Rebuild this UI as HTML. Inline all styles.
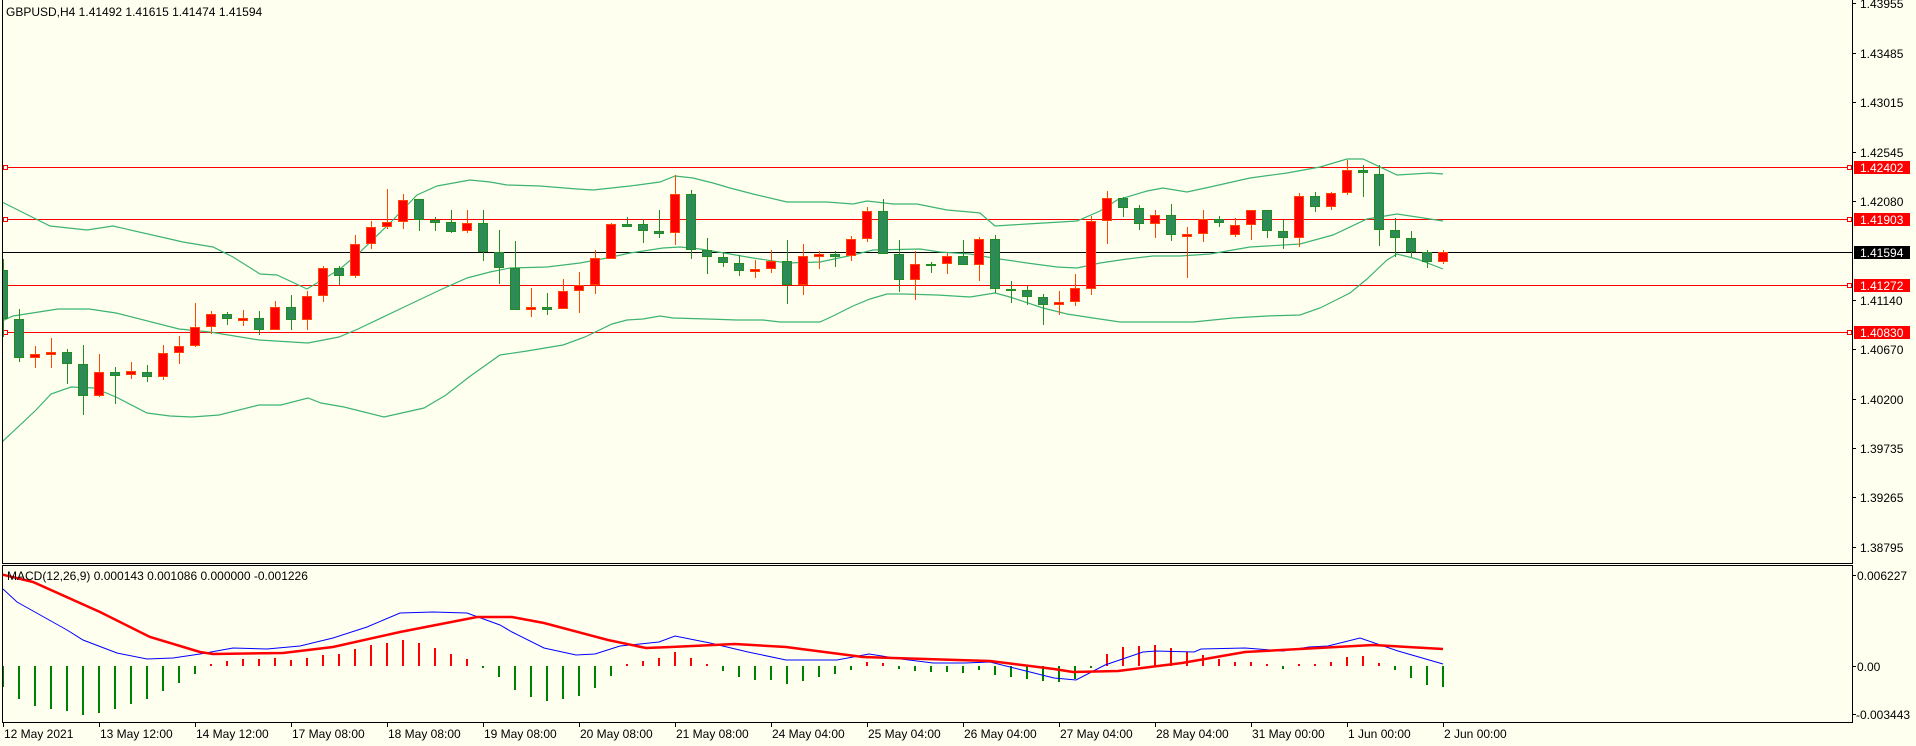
<!DOCTYPE html>
<html><head><meta charset="utf-8"><style>
html,body{margin:0;padding:0;background:#fffff0;}
svg{display:block;font-family:"Liberation Sans",sans-serif;font-size:12px;}
</style></head><body>
<svg width="1916" height="746" viewBox="0 0 1916 746" xmlns="http://www.w3.org/2000/svg">
<rect width="1916" height="746" fill="#fffff0"/>
<defs><clipPath id="main"><rect x="3" y="0" width="1849" height="563"/></clipPath>
<clipPath id="macd"><rect x="3" y="566" width="1849" height="156"/></clipPath></defs>

<!-- frames -->
<path d="M2.5 0V563.5H1852.5V0M2.5 565.5H1852.5V722.5H2.5Z" fill="none" stroke="#000" stroke-width="1"/>

<!-- horizontal lines -->
<g stroke="#ff0000" stroke-width="1">
<line x1="3" y1="167.5" x2="1852" y2="167.5"/>
<line x1="3" y1="219.5" x2="1852" y2="219.5"/>
<line x1="3" y1="285.5" x2="1852" y2="285.5"/>
<line x1="3" y1="332.5" x2="1852" y2="332.5"/>
</g>
<line x1="3" y1="252.5" x2="1852" y2="252.5" stroke="#000"/>
<g fill="#fff" stroke="#ff0000">
<rect x="3.5" y="165.5" width="4" height="4"/><rect x="3.5" y="217.5" width="4" height="4"/><rect x="3.5" y="283.5" width="4" height="4"/><rect x="3.5" y="330.5" width="4" height="4"/>
<rect x="1847.5" y="165.5" width="4" height="4"/><rect x="1847.5" y="217.5" width="4" height="4"/><rect x="1847.5" y="283.5" width="4" height="4"/><rect x="1847.5" y="330.5" width="4" height="4"/>
</g>

<!-- bollinger -->
<g fill="none" stroke="#3cb371" stroke-width="1.2" clip-path="url(#main)">
<polyline points="2,202 50,226 87,230 113,226 183,242 213,247 233,257 260,274 277,275 307,289 340,269 360,252 390,223 417,195 437,186 470,180 490,182 507,185 540,186 577,189 593,190 630,186 660,182 675,176 693,178 713,183 730,188 753,194 787,202 827,202 853,204 867,201 893,204 917,204 947,210 970,212 980,213 995,226 1027,224 1077,221 1100,211 1117,200 1147,191 1163,188 1187,192 1210,187 1250,178 1287,173 1320,167 1347,159 1363,159 1397,175 1430,173 1443,174"/>
<polyline points="2,321 13,316 58,309 89,309 116,313 179,329 210,332 259,340 308,343 339,337 358,329 402,308 440,290 467,278 490,272 510,268 547,267 580,263 607,258 630,253 663,248 680,247 700,249 730,254 753,258 787,263 820,262 853,255 873,250 920,249 940,252 970,254 993,258 1027,263 1057,267 1077,268 1100,263 1127,259 1153,256 1180,256 1210,254 1250,247 1300,244 1333,235 1367,219 1397,214 1417,217 1443,221"/>
<polyline points="2,442 36,410 51,394 71,387 94,388 116,397 147,413 170,416 192,417 219,415 259,405 281,405 308,398 321,403 344,407 384,417 424,408 446,395 469,377 500,355 527,351 563,345 585,337 612,324 627,320 643,319 660,316 673,318 707,319 737,320 763,320 780,322 820,322 833,316 853,306 870,299 887,294 903,294 937,295 970,297 995,293 1010,297 1043,308 1067,314 1093,318 1120,322 1193,322 1233,318 1267,316 1300,315 1320,308 1350,293 1367,279 1387,260 1397,254 1417,259 1443,269"/>
</g>

<!-- candles -->
<g clip-path="url(#main)">
<path stroke="#228b22" stroke-width="1" fill="none" d="M3.5 259V337M19.5 309V362M67.5 349V384M83.5 345V415M115.5 367V404M147.5 365V382M227.5 312V325M259.5 311V335M291.5 295V330M339.5 266V285M419.5 199V231M435.5 217V231M451.5 210V233M483.5 210V261M499.5 230V284M515.5 241V310M547.5 293V315M627.5 217V227M643.5 219V243M659.5 210V238M691.5 190V259M707.5 238V274M723.5 252V267M739.5 255V276M787.5 240V304M835.5 251V267M883.5 199V254M899.5 240V292M931.5 262V273M963.5 240V265M995.5 235V293M1011.5 281V303M1027.5 286V305M1043.5 294V325M1123.5 197V217M1139.5 205V230M1171.5 204V241M1219.5 216V227M1267.5 210V238M1283.5 220V249M1315.5 192V212M1363.5 165V197M1379.5 165V246M1395.5 218V257M1411.5 231V257M1427.5 250V268"/>
<path stroke="#ff4500" stroke-width="1" fill="none" d="M35.5 346V368M51.5 338V368M99.5 354V397M131.5 362V379M163.5 345V380M179.5 336V364M195.5 303V347M211.5 311V334M243.5 310V326M275.5 301V330M307.5 291V330M323.5 266V302M355.5 235V278M371.5 221V249M387.5 189V229M403.5 194V229M467.5 210V233M531.5 288V317M563.5 279V309M579.5 272V313M595.5 250V294M611.5 223V259M675.5 175V245M755.5 260V278M771.5 250V273M803.5 244V295M819.5 251V269M851.5 236V261M867.5 207V242M915.5 251V300M947.5 253V274M979.5 237V281M1059.5 291V315M1075.5 274V306M1091.5 216V295M1107.5 191V244M1155.5 210V238M1187.5 227V278M1203.5 210V242M1235.5 218V237M1251.5 210V240M1299.5 193V247M1331.5 192V210M1347.5 160V195M1443.5 250V264"/>
<g fill="#2e8b57" stroke="#228b22" stroke-width="1">
<rect x="-1.5" y="270.5" width="9" height="48"/><rect x="14.5" y="319.5" width="9" height="38"/><rect x="62.5" y="352.5" width="9" height="11"/><rect x="78.5" y="364.5" width="9" height="31"/><rect x="110.5" y="372.5" width="9" height="3"/><rect x="142.5" y="372.5" width="9" height="4"/><rect x="222.5" y="314.5" width="9" height="4"/><rect x="254.5" y="318.5" width="9" height="11"/><rect x="286.5" y="307.5" width="9" height="12"/><rect x="334.5" y="268.5" width="9" height="7"/><rect x="414.5" y="199.5" width="9" height="20"/><rect x="430.5" y="220.5" width="9" height="2"/><rect x="446.5" y="222.5" width="9" height="9"/><rect x="478.5" y="223.5" width="9" height="28"/><rect x="494.5" y="252.5" width="9" height="15"/><rect x="510.5" y="268.5" width="9" height="41"/><rect x="542.5" y="307.5" width="9" height="2"/><rect x="622.5" y="224.5" width="9" height="2"/><rect x="638.5" y="224.5" width="9" height="6"/><rect x="654.5" y="231.5" width="9" height="2"/><rect x="686.5" y="194.5" width="9" height="55"/><rect x="702.5" y="250.5" width="9" height="6"/><rect x="718.5" y="257.5" width="9" height="5"/><rect x="734.5" y="263.5" width="9" height="7"/><rect x="782.5" y="261.5" width="9" height="23"/><rect x="830.5" y="254.5" width="9" height="2"/><rect x="878.5" y="211.5" width="9" height="42"/><rect x="894.5" y="254.5" width="9" height="25"/><rect x="926.5" y="264.5" width="9" height="1"/><rect x="958.5" y="256.5" width="9" height="8"/><rect x="990.5" y="239.5" width="9" height="49"/><rect x="1006.5" y="289.5" width="9" height="1"/><rect x="1022.5" y="290.5" width="9" height="6"/><rect x="1038.5" y="297.5" width="9" height="7"/><rect x="1118.5" y="198.5" width="9" height="9"/><rect x="1134.5" y="208.5" width="9" height="15"/><rect x="1166.5" y="215.5" width="9" height="19"/><rect x="1214.5" y="219.5" width="9" height="3"/><rect x="1262.5" y="210.5" width="9" height="20"/><rect x="1278.5" y="231.5" width="9" height="6"/><rect x="1310.5" y="196.5" width="9" height="10"/><rect x="1358.5" y="170.5" width="9" height="2"/><rect x="1374.5" y="174.5" width="9" height="55"/><rect x="1390.5" y="230.5" width="9" height="7"/><rect x="1406.5" y="238.5" width="9" height="13"/><rect x="1422.5" y="252.5" width="9" height="9"/>
</g>
<g fill="#ff0000" stroke="#ff4500" stroke-width="1">
<rect x="30.5" y="354.5" width="9" height="3"/><rect x="46.5" y="352.5" width="9" height="2"/><rect x="94.5" y="372.5" width="9" height="23"/><rect x="126.5" y="371.5" width="9" height="3"/><rect x="158.5" y="353.5" width="9" height="23"/><rect x="174.5" y="346.5" width="9" height="6"/><rect x="190.5" y="327.5" width="9" height="18"/><rect x="206.5" y="314.5" width="9" height="12"/><rect x="238.5" y="318.5" width="9" height="2"/><rect x="270.5" y="307.5" width="9" height="22"/><rect x="302.5" y="296.5" width="9" height="23"/><rect x="318.5" y="268.5" width="9" height="27"/><rect x="350.5" y="244.5" width="9" height="31"/><rect x="366.5" y="227.5" width="9" height="16"/><rect x="382.5" y="222.5" width="9" height="4"/><rect x="398.5" y="200.5" width="9" height="21"/><rect x="462.5" y="223.5" width="9" height="7"/><rect x="526.5" y="307.5" width="9" height="2"/><rect x="558.5" y="291.5" width="9" height="17"/><rect x="574.5" y="285.5" width="9" height="5"/><rect x="590.5" y="258.5" width="9" height="26"/><rect x="606.5" y="224.5" width="9" height="34"/><rect x="670.5" y="194.5" width="9" height="38"/><rect x="750.5" y="269.5" width="9" height="2"/><rect x="766.5" y="261.5" width="9" height="7"/><rect x="798.5" y="256.5" width="9" height="28"/><rect x="814.5" y="254.5" width="9" height="2"/><rect x="846.5" y="239.5" width="9" height="16"/><rect x="862.5" y="211.5" width="9" height="27"/><rect x="910.5" y="264.5" width="9" height="15"/><rect x="942.5" y="256.5" width="9" height="7"/><rect x="974.5" y="239.5" width="9" height="25"/><rect x="1054.5" y="302.5" width="9" height="2"/><rect x="1070.5" y="288.5" width="9" height="13"/><rect x="1086.5" y="221.5" width="9" height="67"/><rect x="1102.5" y="198.5" width="9" height="22"/><rect x="1150.5" y="215.5" width="9" height="8"/><rect x="1182.5" y="234.5" width="9" height="2"/><rect x="1198.5" y="219.5" width="9" height="14"/><rect x="1230.5" y="225.5" width="9" height="9"/><rect x="1246.5" y="210.5" width="9" height="14"/><rect x="1294.5" y="196.5" width="9" height="41"/><rect x="1326.5" y="193.5" width="9" height="13"/><rect x="1342.5" y="170.5" width="9" height="22"/><rect x="1438.5" y="252.5" width="9" height="9"/>
</g>
</g>

<!-- header -->
<text x="6" y="16" fill="#000">GBPUSD,H4  1.41492 1.41615 1.41474 1.41594</text>

<!-- price axis -->
<g stroke="#000"><path d="M1852 3.5h4M1852 53.5h4M1852 102.5h4M1852 152.5h4M1852 201.5h4M1852 300.5h4M1852 349.5h4M1852 399.5h4M1852 448.5h4M1852 497.5h4M1852 547.5h4M1852 575.5h4M1852 666.5h4M1852 714.5h4"/></g>
<g fill="#000">
<text x="1860" y="8">1.43955</text><text x="1860" y="58">1.43485</text><text x="1860" y="107">1.43015</text><text x="1860" y="157">1.42545</text><text x="1860" y="206">1.42080</text><text x="1860" y="305">1.41140</text><text x="1860" y="354">1.40670</text><text x="1860" y="404">1.40200</text><text x="1860" y="453">1.39735</text><text x="1860" y="502">1.39265</text><text x="1860" y="552">1.38795</text>
<text x="1857" y="580">0.006227</text><text x="1857" y="671">0.00</text><text x="1856" y="719">-0.003443</text>
</g>
<g fill="#ff0000"><rect x="1854" y="161" width="56" height="13"/><rect x="1854" y="213" width="56" height="13"/><rect x="1854" y="279" width="56" height="13"/><rect x="1854" y="326" width="56" height="13"/></g>
<rect x="1854" y="246" width="56" height="13" fill="#000"/>
<g fill="#fff"><text x="1860" y="172">1.42402</text><text x="1860" y="224">1.41903</text><text x="1860" y="257">1.41594</text><text x="1860" y="290">1.41272</text><text x="1860" y="337">1.40830</text></g>

<!-- MACD -->
<g clip-path="url(#macd)" stroke-width="2" fill="none">
<path stroke="#008000" d="M3 666V687M19 666V699M35 666V706M51 666V709M67 666V711M83 666V715M99 666V713M115 666V709M131 666V704M147 666V699M163 666V691M179 666V683M195 666V674M483 666V668M499 666V677M515 666V690M531 666V697M547 666V701M563 666V699M579 666V696M595 666V688M611 666V676M723 666V671M739 666V677M755 666V680M771 666V680M787 666V684M803 666V681M819 666V677M835 666V674M851 666V670M899 666V669M915 666V671M931 666V672M947 666V672M963 666V673M979 666V670M995 666V675M1011 666V677M1027 666V679M1043 666V681M1059 666V682M1075 666V679M1091 666V668M1283 666V669M1395 666V670M1411 666V678M1427 666V685M1443 666V687"/>
<path stroke="#ff0000" d="M211 666V664M227 666V661M243 666V659M259 666V659M275 666V658M291 666V660M307 666V658M323 666V655M339 666V654M355 666V649M371 666V645M387 666V643M403 666V640M419 666V643M435 666V648M451 666V654M467 666V659M627 666V664M643 666V661M659 666V658M675 666V652M691 666V658M707 666V664M867 666V662M883 666V663M1107 666V654M1123 666V647M1139 666V646M1155 666V645M1171 666V648M1187 666V652M1203 666V655M1219 666V659M1235 666V662M1251 666V662M1267 666V664M1299 666V664M1315 666V664M1331 666V662M1347 666V657M1363 666V656M1379 666V663"/>
<polyline stroke="#0000ff" stroke-width="1" points="3,589 17,602 67,630 83,640 117,653 147,659 173,658 200,654 233,648 267,649 300,646 333,638 367,627 400,613 433,612 467,613 500,625 512,632 544,648 576,655 595,654 620,646 659,642 675,636 710,643 748,652 786,660 837,660 869,654 901,659 933,663 965,663 990,662 1022,670 1054,678 1076,680 1105,665 1143,652 1156,651 1194,652 1201,649 1245,648 1283,651 1309,647 1328,646 1360,638 1398,651 1443,664"/>
<polyline stroke="#ff0000" stroke-width="2.5" points="0,574 33,582 100,612 150,637 200,652 213,654 283,653 333,647 400,632 477,617 512,617 544,623 608,640 646,648 671,647 735,644 786,647 863,657 990,661 1054,669 1073,672 1118,671 1182,663 1245,652 1373,645 1443,649"/>
</g>
<text x="7" y="580" fill="#000">MACD(12,26,9) 0.000143 0.001086 0.000000 -0.001226</text>

<!-- time axis -->
<path stroke="#000" d="M3.5 722V727M99.5 722V727M195.5 722V727M291.5 722V727M387.5 722V727M483.5 722V727M579.5 722V727M675.5 722V727M771.5 722V727M867.5 722V727M963.5 722V727M1059.5 722V727M1155.5 722V727M1251.5 722V727M1347.5 722V727M1443.5 722V727"/>
<g fill="#000">
<text x="4" y="738">12 May 2021</text><text x="100" y="738">13 May 12:00</text><text x="196" y="738">14 May 12:00</text><text x="292" y="738">17 May 08:00</text><text x="388" y="738">18 May 08:00</text><text x="484" y="738">19 May 08:00</text><text x="580" y="738">20 May 08:00</text><text x="676" y="738">21 May 08:00</text><text x="772" y="738">24 May 04:00</text><text x="868" y="738">25 May 04:00</text><text x="964" y="738">26 May 04:00</text><text x="1060" y="738">27 May 04:00</text><text x="1156" y="738">28 May 04:00</text><text x="1252" y="738">31 May 00:00</text><text x="1348" y="738">1 Jun 00:00</text><text x="1444" y="738">2 Jun 00:00</text>
</g>
</svg>
</body></html>
